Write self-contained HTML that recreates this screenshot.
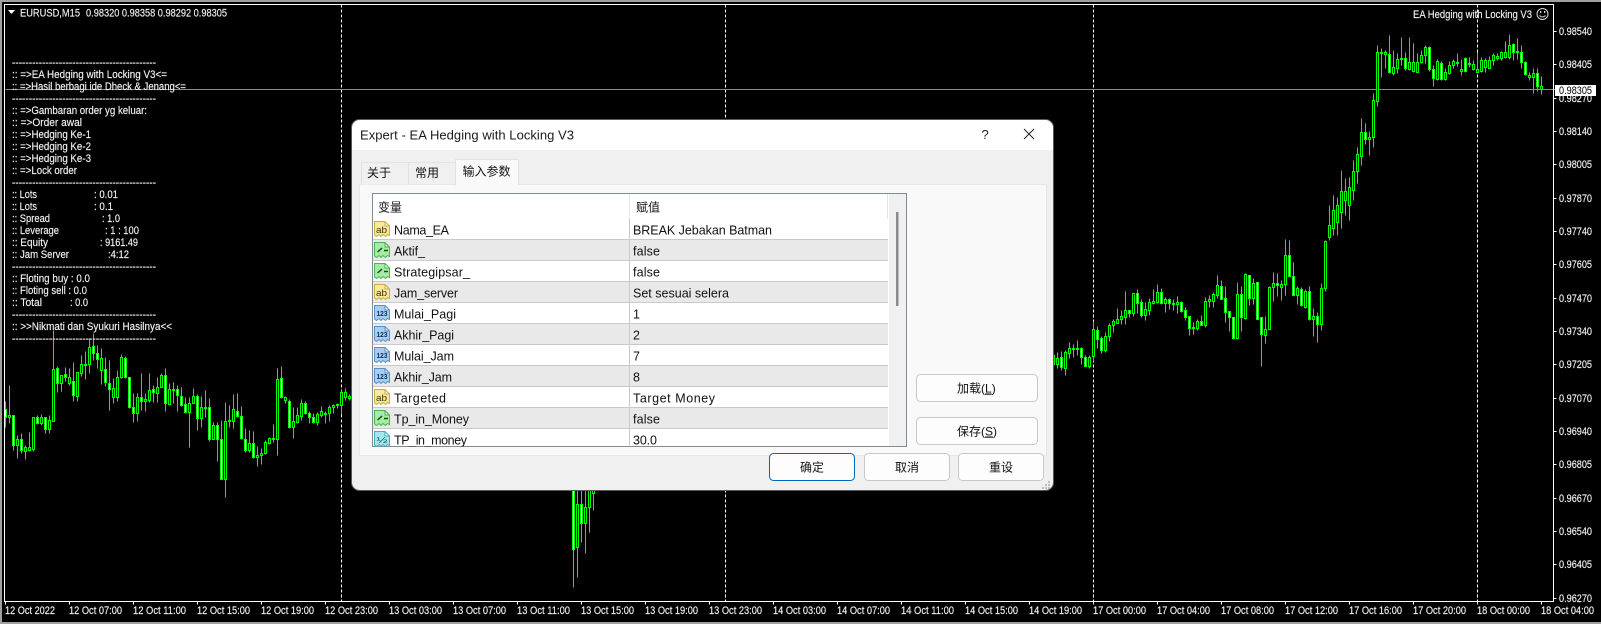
<!DOCTYPE html>
<html><head><meta charset="utf-8"><title>EURUSD,M15</title>
<style>
html,body{margin:0;padding:0;background:#000;width:1601px;height:624px;overflow:hidden}
svg{display:block;position:absolute;left:0;top:0}
text{font-family:"Liberation Sans","Noto Sans CJK SC",sans-serif;white-space:pre}
.c text{font-size:11px;fill:#f2f2f2;stroke:#f2f2f2;stroke-width:.15px}
.n{font-size:12.5px;fill:#111}
.z{font-size:12px;fill:#111}
</style></head><body>
<svg width="1601" height="624" viewBox="0 0 1601 624" xmlns="http://www.w3.org/2000/svg">
<rect width="1601" height="624" fill="#000"/>
<rect width="1601" height="2" fill="#a0a0a0"/><rect width="2" height="624" fill="#a0a0a0"/><rect y="622" width="1601" height="2" fill="#a0a0a0"/>

<g transform="translate(.5,.5)" shape-rendering="crispEdges">
<path d="M341 4V601M725 4V601M1093 4V601M1477 4V601" stroke="#fff" stroke-dasharray="3 2" fill="none"/>
<path d="M5 89H1555" stroke="#8a8a8a"/>
<path stroke="#00ff00" fill="none" d="M5 401V427M9 385V423M13 415V450M17 435V458M21 433V453M25 445V459M29 432V451M33 417V451M37 415V424M41 414V425M45 417V433M49 415V433M53 330V421M57 366V392M61 375V391M65 367V381M69 368V385M73 362V401M77 372V401M81 355V376M85 351V379M89 338V373M93 333V360M97 345V368M101 348V384M105 357V386M109 360V410M113 378V403M117 370V401M121 354V378M125 356V378M129 377V408M133 393V422M137 393V421M141 373V410M145 393V411M149 373V402M153 385V402M157 377V402M161 373V387M165 368V411M169 383V405M173 382V403M177 385V411M181 387V406M185 397V413M189 397V447M193 388V403M197 394V430M201 396V427M205 390V417M209 398V441M213 422V438M217 422V461M221 420V479M225 402V497M229 405V427M233 394V428M237 393V417M241 406V439M245 428V452M249 430V452M253 431V458M257 446V466M261 448V464M265 440V454M269 437V444M273 424V442M277 368V455M281 366V398M285 396V403M289 399V428M293 407V438M297 407V423M301 399V420M305 401V414M309 411V423M313 413V423M317 412V425M321 406V417M325 411V423M329 405V421M333 404V413M337 403V408M341 390V414M345 388V400M349 394V400M573 480V587M577 480V577M581 480V542M585 480V553M589 480V532M593 480V510M1053 350V368M1057 352V368M1061 351V370M1065 350V375M1069 342V358M1073 344V357M1077 340V355M1081 347V364M1085 355V366M1089 355V368M1093 321V361M1097 326V348M1101 336V353M1105 332V352M1109 323V341M1113 319V332M1117 308V323M1121 310V324M1125 291V324M1129 310V317M1133 293V316M1137 289V313M1141 299V317M1145 302V320M1149 298V315M1153 289V304M1157 284V303M1161 288V304M1165 297V312M1169 298V309M1173 299V310M1177 296V313M1181 301V312M1185 307V320M1189 316V335M1193 322V334M1197 319V330M1201 315V325M1205 297V327M1209 295V307M1213 292V307M1217 275V298M1221 280V299M1225 286V322M1229 311V331M1233 317V339M1237 282V339M1241 286V331M1245 273V319M1249 275V305M1253 278V304M1257 282V319M1261 317V366M1265 316V343M1269 286V329M1273 272V301M1277 273V296M1281 280V300M1285 239V295M1289 240V276M1293 262V295M1297 286V304M1301 287V306M1305 289V308M1309 286V320M1313 308V336M1317 312V342M1321 283V330M1325 240V291M1329 205V240M1333 195V235M1337 197V235M1341 170V228M1345 178V215M1349 177V220M1353 160V200M1357 147V183M1361 118V165M1365 123V144M1369 131V155M1373 93V147M1377 45V106M1381 48V77M1385 50V68M1389 35V73M1393 50V75M1397 53V73M1401 37V65M1405 52V70M1409 37V70M1413 43V72M1417 53V72M1421 50V63M1425 45V63M1429 46V71M1433 65V86M1437 59V80M1441 61V80M1445 68V80M1449 61V74M1453 59V68M1457 53V66M1461 59V75M1465 57V72M1469 57V67M1473 60V70M1477 52V72M1481 57V72M1485 58V72M1489 56V68M1493 53V65M1497 53V60M1501 51V60M1505 41V58M1509 34V59M1513 43V60M1517 38V59M1521 45V68M1525 61V75M1529 72V80M1533 68V93M1537 68V91M1541 76V94"/>
<path stroke="#00ff00" fill="#000" d="M8 415h2v2h-2zM16 439h2v6h-2zM24 447h2v4h-2zM28 447h2v3h-2zM32 417h2v32h-2zM40 417h2v6h-2zM48 420h2v9h-2zM52 369h2v52h-2zM60 375h2v8h-2zM68 377h2v6h-2zM76 372h2v24h-2zM80 364h2v9h-2zM84 364h2v1h-2zM88 347h2v17h-2zM100 358h2v12h-2zM112 388h2v9h-2zM116 377h2v20h-2zM120 357h2v20h-2zM136 397h2v16h-2zM144 399h2v2h-2zM148 390h2v10h-2zM156 387h2v6h-2zM160 375h2v12h-2zM168 389h2v15h-2zM172 389h2v1h-2zM188 403h2v9h-2zM192 396h2v7h-2zM200 407h2v11h-2zM204 407h2v1h-2zM212 425h2v14h-2zM224 421h2v58h-2zM228 420h2v1h-2zM232 409h2v12h-2zM248 443h2v7h-2zM256 455h2v2h-2zM260 453h2v2h-2zM264 442h2v11h-2zM268 438h2v5h-2zM272 438h2v1h-2zM276 379h2v60h-2zM284 397h2v3h-2zM292 421h2v6h-2zM296 415h2v7h-2zM300 403h2v13h-2zM316 414h2v8h-2zM320 411h2v4h-2zM324 413h2v1h-2zM328 407h2v6h-2zM332 405h2v2h-2zM336 404h2v1h-2zM340 392h2v13h-2zM344 392h2v5h-2zM348 396h2v2h-2zM576 504h2v43h-2zM584 507h2v16h-2zM588 480h2v27h-2zM592 480h2v13h-2zM1056 358h2v6h-2zM1064 352h2v16h-2zM1068 348h2v5h-2zM1072 348h2v1h-2zM1076 348h2v1h-2zM1088 357h2v9h-2zM1092 329h2v27h-2zM1104 336h2v14h-2zM1108 325h2v11h-2zM1112 321h2v4h-2zM1116 319h2v4h-2zM1120 316h2v3h-2zM1124 310h2v7h-2zM1132 293h2v20h-2zM1144 309h2v6h-2zM1148 302h2v8h-2zM1152 301h2v2h-2zM1156 292h2v10h-2zM1164 299h2v4h-2zM1172 303h2v1h-2zM1176 302h2v2h-2zM1192 327h2v1h-2zM1196 321h2v7h-2zM1204 301h2v24h-2zM1208 299h2v2h-2zM1212 294h2v7h-2zM1216 285h2v10h-2zM1236 294h2v44h-2zM1244 274h2v44h-2zM1252 283h2v15h-2zM1264 329h2v6h-2zM1268 287h2v42h-2zM1272 283h2v4h-2zM1280 284h2v3h-2zM1284 255h2v29h-2zM1296 288h2v7h-2zM1304 291h2v16h-2zM1312 316h2v3h-2zM1320 288h2v36h-2zM1324 241h2v47h-2zM1328 225h2v12h-2zM1332 210h2v18h-2zM1336 205h2v17h-2zM1340 191h2v21h-2zM1344 191h2v9h-2zM1348 187h2v18h-2zM1352 171h2v19h-2zM1356 154h2v17h-2zM1360 132h2v24h-2zM1368 137h2v2h-2zM1372 100h2v37h-2zM1376 52h2v49h-2zM1384 52h2v2h-2zM1392 67h2v6h-2zM1396 59h2v9h-2zM1400 58h2v1h-2zM1408 62h2v7h-2zM1412 62h2v9h-2zM1416 62h2v10h-2zM1420 55h2v7h-2zM1424 47h2v8h-2zM1436 61h2v18h-2zM1444 72h2v7h-2zM1448 65h2v8h-2zM1452 61h2v4h-2zM1456 62h2v1h-2zM1460 69h2v2h-2zM1468 63h2v1h-2zM1472 64h2v5h-2zM1476 69h2v3h-2zM1480 60h2v11h-2zM1484 60h2v7h-2zM1488 60h2v8h-2zM1492 55h2v5h-2zM1496 56h2v2h-2zM1500 52h2v6h-2zM1504 52h2v5h-2zM1508 45h2v12h-2zM1516 51h2v1h-2zM1528 75h2v2h-2zM1532 73h2v4h-2zM1540 86h2v3h-2z"/>
<path stroke="#00ff00" fill="#fff" d="M4 409h2v8h-2zM12 415h2v30h-2zM20 439h2v11h-2zM36 417h2v6h-2zM44 417h2v12h-2zM56 368h2v15h-2zM64 374h2v3h-2zM72 381h2v14h-2zM92 346h2v7h-2zM96 353h2v6h-2zM104 369h2v13h-2zM108 383h2v6h-2zM124 358h2v19h-2zM128 377h2v30h-2zM132 407h2v6h-2zM140 397h2v4h-2zM152 389h2v3h-2zM164 375h2v28h-2zM176 389h2v6h-2zM180 396h2v9h-2zM184 404h2v8h-2zM196 396h2v22h-2zM208 407h2v32h-2zM216 425h2v14h-2zM220 439h2v40h-2zM236 411h2v5h-2zM240 416h2v22h-2zM244 439h2v11h-2zM252 443h2v14h-2zM280 378h2v19h-2zM288 401h2v26h-2zM304 403h2v10h-2zM308 413h2v4h-2zM312 417h2v5h-2zM572 480h2v69h-2zM580 504h2v19h-2zM1052 355h2v9h-2zM1060 357h2v10h-2zM1080 348h2v9h-2zM1084 357h2v9h-2zM1096 330h2v9h-2zM1100 338h2v12h-2zM1128 310h2v3h-2zM1136 293h2v10h-2zM1140 302h2v13h-2zM1160 292h2v11h-2zM1168 299h2v4h-2zM1180 302h2v9h-2zM1184 310h2v7h-2zM1188 316h2v12h-2zM1200 321h2v4h-2zM1220 286h2v13h-2zM1224 298h2v14h-2zM1228 311h2v6h-2zM1232 317h2v21h-2zM1240 294h2v23h-2zM1248 275h2v23h-2zM1256 282h2v37h-2zM1260 317h2v17h-2zM1276 283h2v2h-2zM1288 255h2v21h-2zM1292 276h2v19h-2zM1300 289h2v16h-2zM1308 291h2v28h-2zM1316 316h2v8h-2zM1364 132h2v7h-2zM1380 52h2v1h-2zM1388 54h2v18h-2zM1404 58h2v10h-2zM1428 47h2v22h-2zM1432 69h2v9h-2zM1440 63h2v16h-2zM1464 58h2v13h-2zM1512 44h2v8h-2zM1520 52h2v10h-2zM1524 62h2v12h-2zM1536 73h2v13h-2z"/>
<path d="M4 4H1553V601H4Z" fill="none" stroke="#fff"/>
<path stroke="#fff" d="M5 601v3M69 601v3M133 601v3M197 601v3M261 601v3M325 601v3M389 601v3M453 601v3M517 601v3M581 601v3M645 601v3M709 601v3M773 601v3M837 601v3M901 601v3M965 601v3M1029 601v3M1093 601v3M1157 601v3M1221 601v3M1285 601v3M1349 601v3M1413 601v3M1477 601v3M1541 601v3M1553 31h3M1553 64h3M1553 98h3M1553 131h3M1553 164h3M1553 198h3M1553 231h3M1553 264h3M1553 298h3M1553 331h3M1553 364h3M1553 398h3M1553 431h3M1553 464h3M1553 498h3M1553 531h3M1553 564h3M1553 598h3"/>
</g>

<path d="M8 10h7l-3.5 4z" fill="#fff"/>
<g class="c">
<text x="20" y="16.5" textLength="60" lengthAdjust="spacingAndGlyphs">EURUSD,M15</text>
<text x="86" y="16.5" textLength="141" lengthAdjust="spacingAndGlyphs">0.98320 0.98358 0.98292 0.98305</text>
<text x="1413" y="18" textLength="119" lengthAdjust="spacingAndGlyphs">EA Hedging with Locking V3</text>

<text x="12" y="66" textLength="144" lengthAdjust="spacingAndGlyphs">-------------------------------------------</text>
<text x="12" y="78" textLength="155" lengthAdjust="spacingAndGlyphs">:: =&gt;EA Hedging with Locking V3&lt;=</text>
<text x="12" y="90" textLength="174" lengthAdjust="spacingAndGlyphs">:: =&gt;Hasil berbagi ide Dheck &amp; Jenang&lt;=</text>
<text x="12" y="102" textLength="144" lengthAdjust="spacingAndGlyphs">-------------------------------------------</text>
<text x="12" y="114" textLength="135" lengthAdjust="spacingAndGlyphs">:: =&gt;Gambaran order yg keluar:</text>
<text x="12" y="126" textLength="70" lengthAdjust="spacingAndGlyphs">:: =&gt;Order awal</text>
<text x="12" y="138" textLength="79" lengthAdjust="spacingAndGlyphs">:: =&gt;Hedging Ke-1</text>
<text x="12" y="150" textLength="79" lengthAdjust="spacingAndGlyphs">:: =&gt;Hedging Ke-2</text>
<text x="12" y="162" textLength="79" lengthAdjust="spacingAndGlyphs">:: =&gt;Hedging Ke-3</text>
<text x="12" y="174" textLength="65" lengthAdjust="spacingAndGlyphs">:: =&gt;Lock order</text>
<text x="12" y="186" textLength="144" lengthAdjust="spacingAndGlyphs">-------------------------------------------</text>
<text x="12" y="198" textLength="25" lengthAdjust="spacingAndGlyphs">:: Lots</text><text x="94" y="198" textLength="24" lengthAdjust="spacingAndGlyphs">: 0.01</text>
<text x="12" y="210" textLength="25" lengthAdjust="spacingAndGlyphs">:: Lots</text><text x="94" y="210" textLength="19" lengthAdjust="spacingAndGlyphs">: 0.1</text>
<text x="12" y="222" textLength="38" lengthAdjust="spacingAndGlyphs">:: Spread</text><text x="102" y="222" textLength="18" lengthAdjust="spacingAndGlyphs">: 1.0</text>
<text x="12" y="234" textLength="47" lengthAdjust="spacingAndGlyphs">:: Leverage</text><text x="105" y="234" textLength="34" lengthAdjust="spacingAndGlyphs">: 1 : 100</text>
<text x="12" y="246" textLength="36" lengthAdjust="spacingAndGlyphs">:: Equity</text><text x="100" y="246" textLength="38" lengthAdjust="spacingAndGlyphs">: 9161.49</text>
<text x="12" y="258" textLength="57" lengthAdjust="spacingAndGlyphs">:: Jam Server</text><text x="108" y="258" textLength="21" lengthAdjust="spacingAndGlyphs">:4:12</text>
<text x="12" y="270" textLength="144" lengthAdjust="spacingAndGlyphs">-------------------------------------------</text>
<text x="12" y="282" textLength="78" lengthAdjust="spacingAndGlyphs">:: Floting buy : 0.0</text>
<text x="12" y="294" textLength="75" lengthAdjust="spacingAndGlyphs">:: Floting sell : 0.0</text>
<text x="12" y="306" textLength="30" lengthAdjust="spacingAndGlyphs">:: Total</text><text x="70" y="306" textLength="18" lengthAdjust="spacingAndGlyphs">: 0.0</text>
<text x="12" y="318" textLength="144" lengthAdjust="spacingAndGlyphs">-------------------------------------------</text>
<text x="12" y="330" textLength="160" lengthAdjust="spacingAndGlyphs">:: &gt;&gt;Nikmati dan Syukuri Hasilnya&lt;&lt;</text>
<text x="12" y="342" textLength="144" lengthAdjust="spacingAndGlyphs">-------------------------------------------</text>

<text x="1559" y="35" textLength="33" lengthAdjust="spacingAndGlyphs">0.98540</text>
<text x="1559" y="68" textLength="33" lengthAdjust="spacingAndGlyphs">0.98405</text>
<text x="1559" y="102" textLength="33" lengthAdjust="spacingAndGlyphs">0.98270</text>
<text x="1559" y="135" textLength="33" lengthAdjust="spacingAndGlyphs">0.98140</text>
<text x="1559" y="168" textLength="33" lengthAdjust="spacingAndGlyphs">0.98005</text>
<text x="1559" y="202" textLength="33" lengthAdjust="spacingAndGlyphs">0.97870</text>
<text x="1559" y="235" textLength="33" lengthAdjust="spacingAndGlyphs">0.97740</text>
<text x="1559" y="268" textLength="33" lengthAdjust="spacingAndGlyphs">0.97605</text>
<text x="1559" y="302" textLength="33" lengthAdjust="spacingAndGlyphs">0.97470</text>
<text x="1559" y="335" textLength="33" lengthAdjust="spacingAndGlyphs">0.97340</text>
<text x="1559" y="368" textLength="33" lengthAdjust="spacingAndGlyphs">0.97205</text>
<text x="1559" y="402" textLength="33" lengthAdjust="spacingAndGlyphs">0.97070</text>
<text x="1559" y="435" textLength="33" lengthAdjust="spacingAndGlyphs">0.96940</text>
<text x="1559" y="468" textLength="33" lengthAdjust="spacingAndGlyphs">0.96805</text>
<text x="1559" y="502" textLength="33" lengthAdjust="spacingAndGlyphs">0.96670</text>
<text x="1559" y="535" textLength="33" lengthAdjust="spacingAndGlyphs">0.96540</text>
<text x="1559" y="568" textLength="33" lengthAdjust="spacingAndGlyphs">0.96405</text>
<text x="1559" y="602" textLength="33" lengthAdjust="spacingAndGlyphs">0.96270</text>

<text x="5" y="614" textLength="50" lengthAdjust="spacingAndGlyphs">12 Oct 2022</text>
<text x="69" y="614" textLength="53" lengthAdjust="spacingAndGlyphs">12 Oct 07:00</text>
<text x="133" y="614" textLength="53" lengthAdjust="spacingAndGlyphs">12 Oct 11:00</text>
<text x="197" y="614" textLength="53" lengthAdjust="spacingAndGlyphs">12 Oct 15:00</text>
<text x="261" y="614" textLength="53" lengthAdjust="spacingAndGlyphs">12 Oct 19:00</text>
<text x="325" y="614" textLength="53" lengthAdjust="spacingAndGlyphs">12 Oct 23:00</text>
<text x="389" y="614" textLength="53" lengthAdjust="spacingAndGlyphs">13 Oct 03:00</text>
<text x="453" y="614" textLength="53" lengthAdjust="spacingAndGlyphs">13 Oct 07:00</text>
<text x="517" y="614" textLength="53" lengthAdjust="spacingAndGlyphs">13 Oct 11:00</text>
<text x="581" y="614" textLength="53" lengthAdjust="spacingAndGlyphs">13 Oct 15:00</text>
<text x="645" y="614" textLength="53" lengthAdjust="spacingAndGlyphs">13 Oct 19:00</text>
<text x="709" y="614" textLength="53" lengthAdjust="spacingAndGlyphs">13 Oct 23:00</text>
<text x="773" y="614" textLength="53" lengthAdjust="spacingAndGlyphs">14 Oct 03:00</text>
<text x="837" y="614" textLength="53" lengthAdjust="spacingAndGlyphs">14 Oct 07:00</text>
<text x="901" y="614" textLength="53" lengthAdjust="spacingAndGlyphs">14 Oct 11:00</text>
<text x="965" y="614" textLength="53" lengthAdjust="spacingAndGlyphs">14 Oct 15:00</text>
<text x="1029" y="614" textLength="53" lengthAdjust="spacingAndGlyphs">14 Oct 19:00</text>
<text x="1093" y="614" textLength="53" lengthAdjust="spacingAndGlyphs">17 Oct 00:00</text>
<text x="1157" y="614" textLength="53" lengthAdjust="spacingAndGlyphs">17 Oct 04:00</text>
<text x="1221" y="614" textLength="53" lengthAdjust="spacingAndGlyphs">17 Oct 08:00</text>
<text x="1285" y="614" textLength="53" lengthAdjust="spacingAndGlyphs">17 Oct 12:00</text>
<text x="1349" y="614" textLength="53" lengthAdjust="spacingAndGlyphs">17 Oct 16:00</text>
<text x="1413" y="614" textLength="53" lengthAdjust="spacingAndGlyphs">17 Oct 20:00</text>
<text x="1477" y="614" textLength="53" lengthAdjust="spacingAndGlyphs">18 Oct 00:00</text>
<text x="1541" y="614" textLength="53" lengthAdjust="spacingAndGlyphs">18 Oct 04:00</text>
</g>
<rect x="1555" y="85" width="41" height="11" fill="#fff"/>
<text x="1559" y="94" font-size="11" fill="#000" textLength="33" lengthAdjust="spacingAndGlyphs">0.98305</text>
<g fill="none" stroke="#d8d8d8"><circle cx="1542.5" cy="14" r="5.5"/><path d="M1539.5 15.5q3 3 6 0"/></g>
<g fill="#d8d8d8"><rect x="1540" y="11" width="1.3" height="2"/><rect x="1544" y="11" width="1.3" height="2"/></g>

<!-- dialog -->
<rect x="351.5" y="119.5" width="702" height="371" rx="8" fill="#f0f0f0" stroke="#5a5a5a"/>
<path d="M352 150V128a8 8 0 0 1 8-8H1045a8 8 0 0 1 8 8V150Z" fill="#fff"/>
<text x="360" y="139.5" font-size="13" fill="#1a1a1a" textLength="214">Expert - EA Hedging with Locking V3</text>
<text x="981.5" y="139" font-size="13" fill="#222">?</text>
<path d="M1024 129l10 10M1034 129l-10 10" stroke="#222" fill="none"/>

<!-- panel -->
<rect x="359.5" y="184.5" width="687" height="271" fill="#f9f9f9" stroke="#e6e6e6"/>
<!-- tabs -->
<path d="M361.5 184.5V162.5H408.5V184.5M408.5 162.5H455.5V184.5" fill="#f0f0f0" stroke="#e2e2e2"/>
<path d="M455.5 185V159.5H518.5V185Z" fill="#f9f9f9" stroke="#e2e2e2"/><rect x="456" y="183" width="62" height="3" fill="#f9f9f9"/>
<text class="z" x="367" y="177">关于</text>
<text class="z" x="415" y="177">常用</text>
<text class="z" x="462.5" y="175.500">输入参数</text>

<!-- table -->
<rect x="372.500" y="193.500" width="534" height="253" fill="#fff" stroke="#848a91"/>
<rect x="889" y="194" width="17" height="252" fill="#f0f0f0"/>
<rect x="896" y="212" width="2.500" height="94" fill="#8a8a8a"/>
<path d="M629.500 194V219M887.500 194V219" stroke="#e4e4e4" fill="none"/>
<text class="z" x="378" y="211.500">变量</text>
<text class="z" x="636" y="211.500">赋值</text>
<defs><clipPath id="t"><rect x="373" y="194" width="516" height="252.500"/></clipPath></defs>
<g clip-path="url(#t)">
<g fill="#e9e9e9"><rect x="373" y="240" width="515" height="21"/><rect x="373" y="282" width="515" height="21"/><rect x="373" y="324" width="515" height="21"/><rect x="373" y="366" width="515" height="21"/><rect x="373" y="408" width="515" height="21"/></g>
<g stroke="#c9c9c9" fill="none" shape-rendering="crispEdges"><path d="M373 239.500H888M373 260.500H888M373 281.500H888M373 302.500H888M373 323.500H888M373 344.500H888M373 365.500H888M373 386.500H888M373 407.500H888M373 428.500H888M629.500 219V447"/></g>

<g stroke-width="1">
<path transform="translate(374,221)" d="M.5 .5H11L15.500 5V14.500L13.500 13.500 11.500 15.500 9 13.500 7 15.500 5 13.500 2.500 15.500 .5 14ZM11 .5V5H15.500" fill="#f6e99c" stroke="#c8ae45"/>
<path transform="translate(374,242)" d="M.5 .5H11L15.500 5V14.500L13.500 13.500 11.500 15.500 9 13.500 7 15.500 5 13.500 2.500 15.500 .5 14ZM11 .5V5H15.500" fill="#a6eaa6" stroke="#4fb155"/>
<path transform="translate(374,263)" d="M.5 .5H11L15.500 5V14.500L13.500 13.500 11.500 15.500 9 13.500 7 15.500 5 13.500 2.500 15.500 .5 14ZM11 .5V5H15.500" fill="#a6eaa6" stroke="#4fb155"/>
<path transform="translate(374,284)" d="M.5 .5H11L15.500 5V14.500L13.500 13.500 11.500 15.500 9 13.500 7 15.500 5 13.500 2.500 15.500 .5 14ZM11 .5V5H15.500" fill="#f6e99c" stroke="#c8ae45"/>
<path transform="translate(374,305)" d="M.5 .5H11L15.500 5V14.500L13.500 13.500 11.500 15.500 9 13.500 7 15.500 5 13.500 2.500 15.500 .5 14ZM11 .5V5H15.500" fill="#a9cdf0" stroke="#5c90c6"/>
<path transform="translate(374,326)" d="M.5 .5H11L15.500 5V14.500L13.500 13.500 11.500 15.500 9 13.500 7 15.500 5 13.500 2.500 15.500 .5 14ZM11 .5V5H15.500" fill="#a9cdf0" stroke="#5c90c6"/>
<path transform="translate(374,347)" d="M.5 .5H11L15.500 5V14.500L13.500 13.500 11.500 15.500 9 13.500 7 15.500 5 13.500 2.500 15.500 .5 14ZM11 .5V5H15.500" fill="#a9cdf0" stroke="#5c90c6"/>
<path transform="translate(374,368)" d="M.5 .5H11L15.500 5V14.500L13.500 13.500 11.500 15.500 9 13.500 7 15.500 5 13.500 2.500 15.500 .5 14ZM11 .5V5H15.500" fill="#a9cdf0" stroke="#5c90c6"/>
<path transform="translate(374,389)" d="M.5 .5H11L15.500 5V14.500L13.500 13.500 11.500 15.500 9 13.500 7 15.500 5 13.500 2.500 15.500 .5 14ZM11 .5V5H15.500" fill="#f6e99c" stroke="#c8ae45"/>
<path transform="translate(374,410)" d="M.5 .5H11L15.500 5V14.500L13.500 13.500 11.500 15.500 9 13.500 7 15.500 5 13.500 2.500 15.500 .5 14ZM11 .5V5H15.500" fill="#a6eaa6" stroke="#4fb155"/>
<path transform="translate(374,431)" d="M.5 .5H11L15.500 5V14.500L13.500 13.500 11.500 15.500 9 13.500 7 15.500 5 13.500 2.500 15.500 .5 14ZM11 .5V5H15.500" fill="#a5e6ec" stroke="#48abb8"/>
</g>
<g fill="none" stroke="#0d4f18" stroke-width="1.500">
<path d="M377.500 252L382 248M384 250.500H388"/>
<path d="M377.500 273L382 269M384 271.500H388"/>
<path d="M377.500 420L382 416M384 418.500H388"/>
</g>
<g font-size="9.500" fill="#3d3000">
<text x="376" y="233" textLength="11" lengthAdjust="spacingAndGlyphs">ab</text>
<text x="376" y="296" textLength="11" lengthAdjust="spacingAndGlyphs">ab</text>
<text x="376" y="401" textLength="11" lengthAdjust="spacingAndGlyphs">ab</text>
</g>
<g font-size="7.500" font-weight="bold" fill="#0c2c50">
<text x="376.500" y="316" textLength="11" lengthAdjust="spacingAndGlyphs">123</text>
<text x="376.500" y="337" textLength="11" lengthAdjust="spacingAndGlyphs">123</text>
<text x="376.500" y="358" textLength="11" lengthAdjust="spacingAndGlyphs">123</text>
<text x="376.500" y="379" textLength="11" lengthAdjust="spacingAndGlyphs">123</text>
</g>
<text x="376.500" y="443" font-size="8.500" fill="#0e5560" textLength="11" lengthAdjust="spacingAndGlyphs">½</text>

<text class="n" x="394" y="234.500" textLength="55">Nama_EA</text>
<text class="n" x="394" y="255.500" textLength="31">Aktif_</text>
<text class="n" x="394" y="276.500" textLength="76">Strategipsar_</text>
<text class="n" x="394" y="297.500" textLength="64">Jam_server</text>
<text class="n" x="394" y="318.500" textLength="62">Mulai_Pagi</text>
<text class="n" x="394" y="339.500" textLength="60">Akhir_Pagi</text>
<text class="n" x="394" y="360.500" textLength="60">Mulai_Jam</text>
<text class="n" x="394" y="381.500" textLength="58">Akhir_Jam</text>
<text class="n" x="394" y="402.500" textLength="52">Targeted</text>
<text class="n" x="394" y="423.500" textLength="75">Tp_in_Money</text>
<text class="n" x="394" y="444.500" textLength="73">TP_in_money</text>

<text class="n" x="633" y="234.500" textLength="139">BREAK Jebakan Batman</text>
<text class="n" x="633" y="255.500" textLength="27">false</text>
<text class="n" x="633" y="276.500" textLength="27">false</text>
<text class="n" x="633" y="297.500" textLength="96">Set sesuai selera</text>
<text class="n" x="633" y="318.500">1</text>
<text class="n" x="633" y="339.500">2</text>
<text class="n" x="633" y="360.500">7</text>
<text class="n" x="633" y="381.500">8</text>
<text class="n" x="633" y="402.500" textLength="82">Target Money</text>
<text class="n" x="633" y="423.500" textLength="27">false</text>
<text class="n" x="633" y="444.500" textLength="24">30.0</text>
</g>

<!-- buttons -->
<g fill="#fdfdfd" stroke="#c8c8c8">
<rect x="916.500" y="374.500" width="121" height="27" rx="4"/>
<rect x="916.500" y="417.500" width="121" height="27" rx="4"/>
<rect x="864.500" y="453.500" width="85" height="27" rx="4"/>
<rect x="958.500" y="453.500" width="85" height="27" rx="4"/>
</g>
<rect x="769.500" y="453.500" width="85" height="27" rx="4" fill="#fdfdfd" stroke="#0067c0"/>
<text class="z" x="957" y="392.500">加载(<tspan text-decoration="underline">L</tspan>)</text>
<text class="z" x="957" y="435.500">保存(<tspan text-decoration="underline">S</tspan>)</text>
<text class="z" x="800" y="471.500">确定</text>
<text class="z" x="895" y="471.500">取消</text>
<text class="z" x="989" y="471.500">重设</text>
<g fill="#bdbdbd"><rect x="1048" y="481" width="2" height="2"/><rect x="1045" y="484" width="2" height="2"/><rect x="1048" y="484" width="2" height="2"/><rect x="1042" y="487" width="2" height="2"/><rect x="1045" y="487" width="2" height="2"/><rect x="1048" y="487" width="2" height="2"/></g>
</svg>
</body></html>
